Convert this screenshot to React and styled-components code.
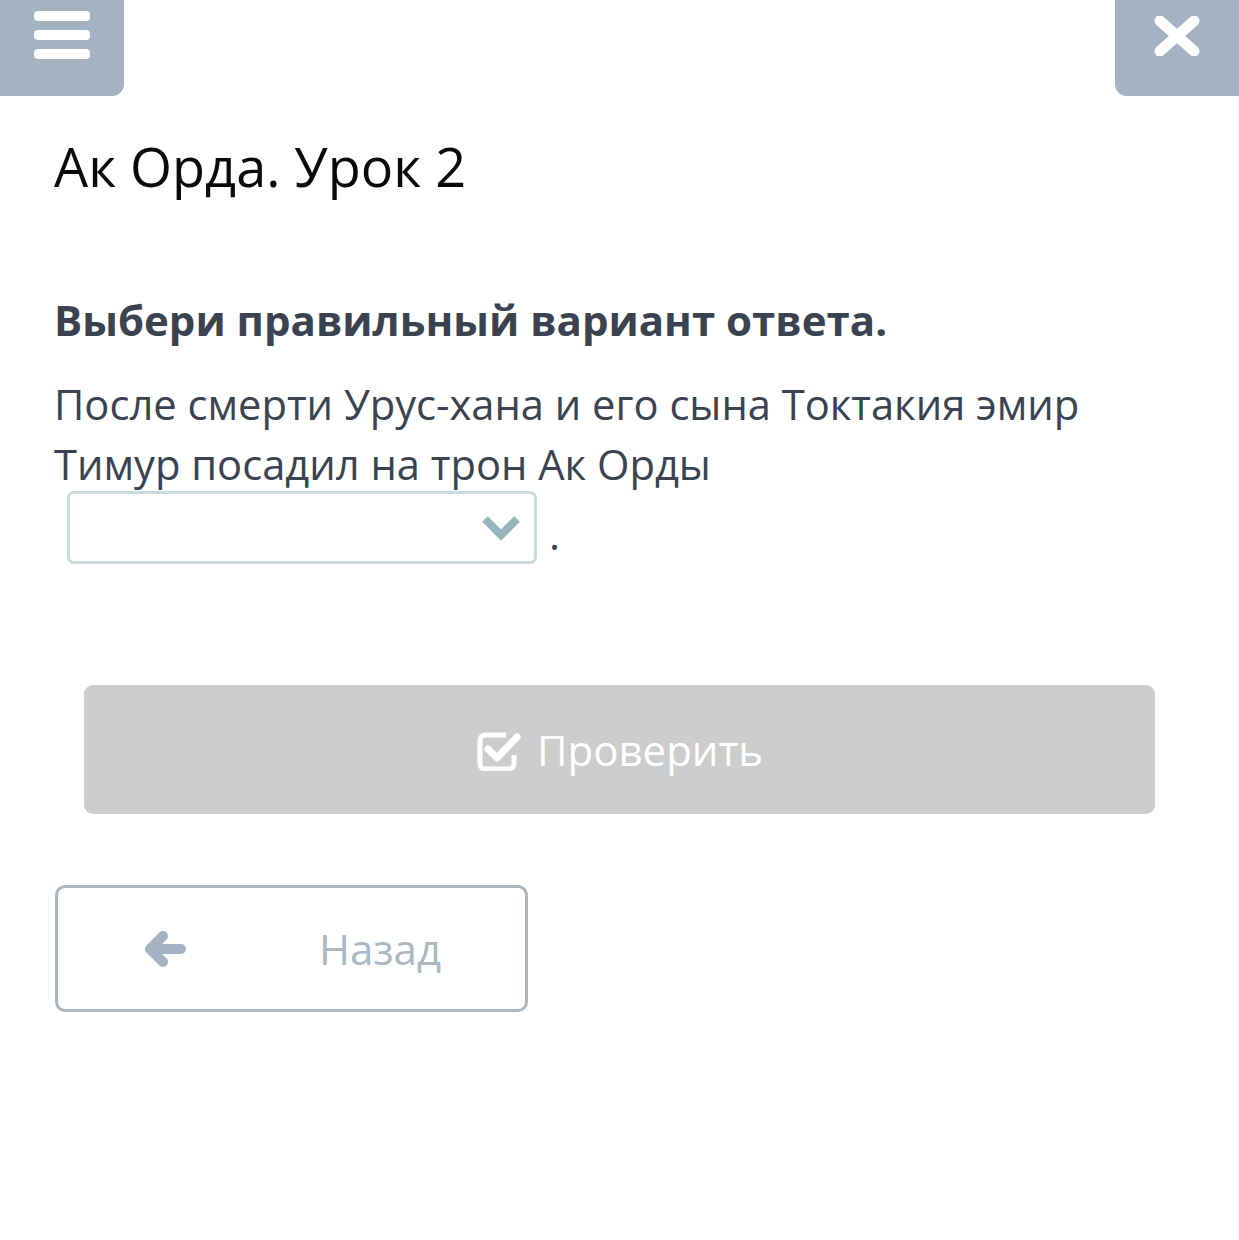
import React from 'react';
import styled, { createGlobalStyle } from 'styled-components';

const GlobalStyle = createGlobalStyle`
  html, body {
    margin: 0;
    padding: 0;
    background: #ffffff;
    font-family: "Open Sans", "Noto Sans", sans-serif;
  }
`;

const Page = styled.div`
  width: 1239px;
  min-height: 1240px;
  background: #fff;
`;

const TopBar = styled.div`
  display: flex;
  justify-content: space-between;
  height: 96px;
`;

const CornerButton = styled.div`
  width: 124px;
  height: 96px;
  background: #a3b3c1;
  display: flex;
  justify-content: center;
  padding-top: ${p => p.top}px;
  box-sizing: border-box;
  border-bottom-left-radius: ${p => (p.side === 'right' ? 12 : 0)}px;
  border-bottom-right-radius: ${p => (p.side === 'left' ? 12 : 0)}px;
`;

const Content = styled.div`
  padding: 0 55px 0 54px;
`;

const Title = styled.h1`
  margin: 38px 0 0;
  font-size: 54px;
  font-weight: 400;
  line-height: 64px;
  color: #0a0a0a;
`;

const Question = styled.div`
  margin-top: 97px;
  font-size: 42px;
  font-weight: 700;
  line-height: 50px;
  color: #3b4351;
`;

const Body = styled.p`
  margin: 29px 0 0;
  font-size: 41.7px;
  line-height: 60px;
  color: #3b4351;
`;

const SelectRow = styled.div`
  display: flex;
  align-items: flex-end;
  padding-left: 13px;
  margin-top: -3px;
  color: #3b4351;
  font-size: 42px;
`;

const SelectBox = styled.div`
  width: 470px;
  height: 73px;
  box-sizing: border-box;
  border: 3px solid #c9dcdd;
  border-radius: 7px;
  display: flex;
  align-items: center;
  justify-content: flex-end;
  padding-right: 13px;
`;

const Dot = styled.span`
  margin-left: 12px;
  line-height: 1;
  transform: translateY(-9px);
`;

const CheckButton = styled.div`
  margin: 121px 29px 0 30px;
  height: 129px;
  border-radius: 9px;
  background: #cccccc;
  display: flex;
  align-items: center;
  justify-content: center;
  gap: 15px;
  color: #ffffff;
  font-size: 42px;
`;

const BackButton = styled.div`
  margin-top: 71px;
  margin-left: 1px;
  width: 473px;
  height: 127px;
  box-sizing: border-box;
  border: 3px solid #a9b7c3;
  border-radius: 10px;
  display: flex;
  align-items: center;
  padding-left: 85px;
  color: #a9b8c3;
  font-size: 42px;
`;

const BackLabel = styled.span`
  margin-left: 132px;
`;

const Hamburger = () => (
  <svg width="58" height="50" viewBox="0 0 58 50">
    <g fill="#fff">
      <rect x="1" y="0" width="56" height="10" rx="4" />
      <rect x="1" y="19" width="56" height="10" rx="4" />
      <rect x="1" y="38" width="56" height="10" rx="4" />
    </g>
  </svg>
);

const CloseIcon = () => (
  <svg width="48" height="40" viewBox="0 0 48 40">
    <g stroke="#fff" strokeWidth="11" strokeLinecap="round">
      <line x1="7" y1="5" x2="41" y2="35" />
      <line x1="41" y1="5" x2="7" y2="35" />
    </g>
  </svg>
);

const Chevron = () => (
  <svg width="40" height="28" viewBox="0 0 40 28">
    <polyline points="4,5 20,21 36,5" fill="none" stroke="#97b5bd" strokeWidth="8" strokeLinejoin="miter" />
  </svg>
);

const CheckSquare = () => (
  <svg width="46" height="42" viewBox="0 0 46 42">
    <path d="M30 6 H9 a5 5 0 0 0 -5 5 v24 a5 5 0 0 0 5 5 h24 a5 5 0 0 0 5 -5 v-9" fill="none" stroke="#fff" strokeWidth="5" />
    <polyline points="12,20 21,29 41,8" fill="none" stroke="#fff" strokeWidth="7" strokeLinecap="round" strokeLinejoin="round" />
  </svg>
);

const ArrowLeft = () => (
  <svg width="44" height="38" viewBox="0 0 44 38">
    <g stroke="#a3b3c1" strokeWidth="10" strokeLinecap="round" strokeLinejoin="round" fill="none">
      <line x1="8" y1="19" x2="38" y2="19" />
      <polyline points="20,6 7,19 20,32" />
    </g>
  </svg>
);

export default function App() {
  return (
    <Page>
      <GlobalStyle />
      <TopBar>
        <CornerButton side="left" top={11}>
          <Hamburger />
        </CornerButton>
        <CornerButton side="right" top={16}>
          <CloseIcon />
        </CornerButton>
      </TopBar>
      <Content>
        <Title>Ак Орда. Урок 2</Title>
        <Question>Выбери правильный вариант ответа.</Question>
        <Body>
          После смерти Урус-хана и его сына Токтакия эмир
          <br />
          Тимур посадил на трон Ак Орды
        </Body>
        <SelectRow>
          <SelectBox>
            <Chevron />
          </SelectBox>
          <Dot>.</Dot>
        </SelectRow>
        <CheckButton>
          <CheckSquare />
          <span>Проверить</span>
        </CheckButton>
        <BackButton>
          <ArrowLeft />
          <BackLabel>Назад</BackLabel>
        </BackButton>
      </Content>
    </Page>
  );
}
